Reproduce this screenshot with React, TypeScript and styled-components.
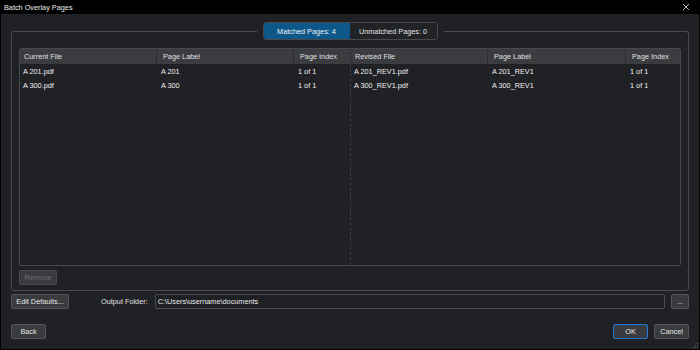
import React from 'react'
import styled, { createGlobalStyle } from 'styled-components'

const GlobalStyle = createGlobalStyle`
  html, body {
    margin: 0;
    padding: 0;
    background: #000;
  }
  body {
    font-family: 'Liberation Sans', Arial, sans-serif;
    font-size: 7.3px;
    color: #e6e6e6;
  }
  * {
    box-sizing: border-box;
  }
`

const Window = styled.div`
  position: relative;
  display: flex;
  flex-direction: column;
  width: 700px;
  height: 350px;
  background: #000;
`

const TitleBar = styled.div`
  display: flex;
  align-items: center;
  justify-content: space-between;
  height: 14px;
  padding: 0 10px 0 4px;
  color: #ececec;
  flex-shrink: 0;
`

const CloseButton = styled.div`
  display: flex;
  width: 8px;
  height: 8px;
  color: #c8c8c8;
`

const Body = styled.div`
  display: flex;
  flex-direction: column;
  flex: 1;
  min-height: 0;
  padding: 8px 10px 10px 10px;
  margin: 0 1px 1px 1px;
  background: #202124;
`

const Group = styled.fieldset`
  display: flex;
  flex-direction: column;
  flex: 1;
  min-height: 0;
  margin: 0;
  padding: 8px 7px 5px 7px;
  border: 1px solid #4a4b4e;
  border-radius: 3px;
`

const Legend = styled.legend`
  margin: 0 auto;
  padding: 0 6px;
`

const Tabs = styled.div`
  display: flex;
  height: 18px;
  border: 1px solid #47484b;
  border-radius: 3px;
  overflow: hidden;
`

const Tab = styled.div<{ $active?: boolean }>`
  display: flex;
  align-items: center;
  justify-content: center;
  width: ${p => (p.$active ? '86px' : '87px')};
  background: ${p => (p.$active ? '#0e5889' : '#222326')};
  color: ${p => (p.$active ? '#eef3f8' : '#e4e4e4')};
`

const TableFrame = styled.div`
  display: flex;
  flex: 1;
  min-height: 0;
  border: 1px solid #48494c;
  border-radius: 2px;
  overflow: hidden;
`

const Pane = styled.div<{ $left?: boolean }>`
  display: flex;
  flex-direction: column;
  width: ${p => (p.$left ? '331px' : 'auto')};
  flex: ${p => (p.$left ? 'none' : '1')};
  border-right: ${p => (p.$left ? '1px dashed #3c3d40' : 'none')};
`

const Row = styled.div<{ $cols: string }>`
  display: grid;
  grid-template-columns: ${p => p.$cols};
  height: 14px;
  align-items: center;
`

const HeaderRow = styled(Row)`
  height: 15px;
  background: #3b3c3f;
  align-items: stretch;
`

const HeaderCell = styled.div`
  display: flex;
  align-items: center;
  padding-left: 6px;
  border-left: 1px solid #2c2d30;
  color: #e0e0e0;
  white-space: nowrap;

  &:first-child {
    padding-left: 4px;
    border-left: none;
  }
`

const Cell = styled.div`
  padding-left: 5px;
  color: #f0f0f0;
  white-space: nowrap;

  &:first-child {
    padding-left: 3px;
  }
`

const Button = styled.button<{ $width: number; $primary?: boolean }>`
  width: ${p => p.$width}px;
  height: 15px;
  padding: 0;
  font: inherit;
  color: ${p => (p.disabled ? '#6e6f72' : '#e4e4e4')};
  background: #3a3b3e;
  border: 1px solid ${p => (p.$primary ? '#1c7cd6' : p.disabled ? '#4a4b4e' : '#55565a')};
  border-radius: 2px;
  flex-shrink: 0;
`

const RemoveRow = styled.div`
  display: flex;
  margin-top: 4px;
`

const FolderRow = styled.div`
  display: flex;
  align-items: center;
  margin-top: 3px;
`

const FolderLabel = styled.span`
  margin: 0 7px 0 32px;
  color: #e0e0e0;
`

const FolderInput = styled.div`
  display: flex;
  align-items: center;
  flex: 1;
  height: 15px;
  padding-left: 2px;
  margin-right: 6px;
  border: 1px solid #4a4b4e;
  border-radius: 2px;
  background: #1f2023;
  color: #eaeaea;
`

const FooterRow = styled.div`
  display: flex;
  align-items: center;
  gap: 6px;
  margin-top: 15px;
`

const Spacer = styled.div`
  flex: 1;
`

const Grip = styled.div`
  position: absolute;
  right: 1px;
  bottom: 1px;
  width: 6px;
  height: 6px;
  display: flex;
`

const leftCols = '136px 137px 1fr'
const rightCols = '136px 138px 1fr'

const leftRows = [
  ['A 201.pdf', 'A 201', '1 of 1'],
  ['A 300.pdf', 'A 300', '1 of 1'],
]

const rightRows = [
  ['A 201_REV1.pdf', 'A 201_REV1', '1 of 1'],
  ['A 300_REV1.pdf', 'A 300_REV1', '1 of 1'],
]

const TablePane = ({ left, cols, headers, rows }: { left?: boolean; cols: string; headers: string[]; rows: string[][] }) => (
  <Pane $left={left}>
    <HeaderRow $cols={cols}>
      {headers.map(h => (
        <HeaderCell key={h}>{h}</HeaderCell>
      ))}
    </HeaderRow>
    {rows.map(r => (
      <Row key={r[0]} $cols={cols}>
        {r.map((c, i) => (
          <Cell key={i}>{c}</Cell>
        ))}
      </Row>
    ))}
  </Pane>
)

export default function App() {
  return (
    <>
      <GlobalStyle />
      <Window>
        <TitleBar>
          <span>Batch Overlay Pages</span>
          <CloseButton>
            <svg width="8" height="8" viewBox="0 0 8 8">
              <path d="M1 1 L7 7 M7 1 L1 7" stroke="currentColor" strokeWidth="0.9" />
            </svg>
          </CloseButton>
        </TitleBar>
        <Body>
          <Group>
            <Legend>
              <Tabs>
                <Tab $active>Matched Pages: 4</Tab>
                <Tab>Unmatched Pages: 0</Tab>
              </Tabs>
            </Legend>
            <TableFrame>
              <TablePane left cols={leftCols} headers={['Current File', 'Page Label', 'Page Index']} rows={leftRows} />
              <TablePane cols={rightCols} headers={['Revised File', 'Page Label', 'Page Index']} rows={rightRows} />
            </TableFrame>
            <RemoveRow>
              <Button $width={38} disabled>
                Remove
              </Button>
            </RemoveRow>
          </Group>
          <FolderRow>
            <Button $width={58}>Edit Defaults...</Button>
            <FolderLabel>Output Folder:</FolderLabel>
            <FolderInput>C:\Users\username\documents</FolderInput>
            <Button $width={18}>...</Button>
          </FolderRow>
          <FooterRow>
            <Button $width={35}>Back</Button>
            <Spacer />
            <Button $width={35} $primary>
              OK
            </Button>
            <Button $width={35}>Cancel</Button>
          </FooterRow>
        </Body>
        <Grip>
          <svg width="6" height="6" viewBox="0 0 6 6">
            <rect x="4" y="0" width="1" height="1" fill="#6a6a6a" />
            <rect x="2" y="2" width="1" height="1" fill="#6a6a6a" />
            <rect x="4" y="2" width="1" height="1" fill="#6a6a6a" />
            <rect x="0" y="4" width="1" height="1" fill="#6a6a6a" />
            <rect x="2" y="4" width="1" height="1" fill="#6a6a6a" />
            <rect x="4" y="4" width="1" height="1" fill="#6a6a6a" />
          </svg>
        </Grip>
      </Window>
    </>
  )
}
